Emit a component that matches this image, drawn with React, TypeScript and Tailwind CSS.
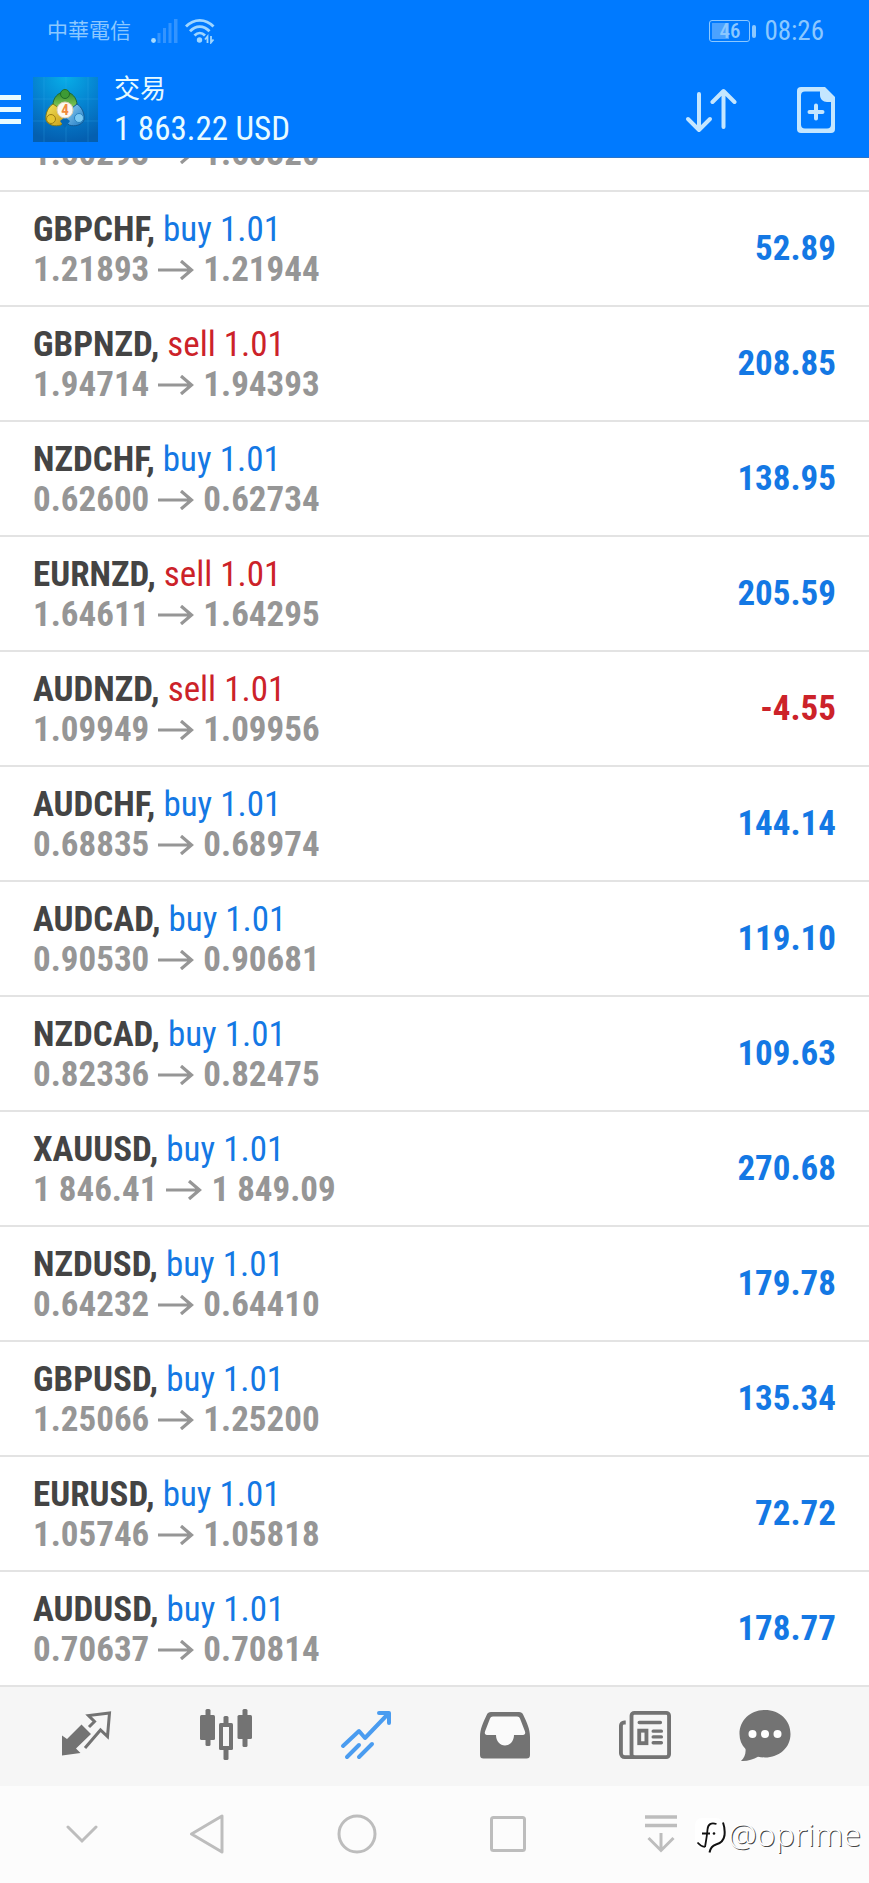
import React from 'react';

type Position = {
  symbol: string;
  side: 'buy' | 'sell';
  volume: string;
  open: string;
  current: string;
  profit: string;
};

const positions: Position[] = [
  { symbol: 'GBPCHF', side: 'buy', volume: '1.01', open: '1.21893', current: '1.21944', profit: '52.89' },
  { symbol: 'GBPNZD', side: 'sell', volume: '1.01', open: '1.94714', current: '1.94393', profit: '208.85' },
  { symbol: 'NZDCHF', side: 'buy', volume: '1.01', open: '0.62600', current: '0.62734', profit: '138.95' },
  { symbol: 'EURNZD', side: 'sell', volume: '1.01', open: '1.64611', current: '1.64295', profit: '205.59' },
  { symbol: 'AUDNZD', side: 'sell', volume: '1.01', open: '1.09949', current: '1.09956', profit: '-4.55' },
  { symbol: 'AUDCHF', side: 'buy', volume: '1.01', open: '0.68835', current: '0.68974', profit: '144.14' },
  { symbol: 'AUDCAD', side: 'buy', volume: '1.01', open: '0.90530', current: '0.90681', profit: '119.10' },
  { symbol: 'NZDCAD', side: 'buy', volume: '1.01', open: '0.82336', current: '0.82475', profit: '109.63' },
  { symbol: 'XAUUSD', side: 'buy', volume: '1.01', open: '1 846.41', current: '1 849.09', profit: '270.68' },
  { symbol: 'NZDUSD', side: 'buy', volume: '1.01', open: '0.64232', current: '0.64410', profit: '179.78' },
  { symbol: 'GBPUSD', side: 'buy', volume: '1.01', open: '1.25066', current: '1.25200', profit: '135.34' },
  { symbol: 'EURUSD', side: 'buy', volume: '1.01', open: '1.05746', current: '1.05818', profit: '72.72' },
  { symbol: 'AUDUSD', side: 'buy', volume: '1.01', open: '0.70637', current: '0.70814', profit: '178.77' },
];

function StatusBar() {
  return (
    <div className="flex h-[62px] items-center justify-between pl-[47px] pr-[45px] text-[#8cc8ff]">
      <div className="flex items-center">
        <span className="text-[21px] leading-none">中華電信</span>
        <svg className="ml-5 h-[26px] w-[27px]" viewBox="0 0 27 26">
          <circle cx="2.5" cy="22.5" r="2.4" fill="#a8dcff" />
          <g fill="#3394ff">
            <rect x="6.5" y="15" width="3" height="10" />
            <rect x="12" y="10" width="3" height="15" />
            <rect x="17.5" y="5" width="3" height="20" />
            <rect x="23" y="1" width="3.5" height="24" />
          </g>
        </svg>
        <svg className="ml-[7px] h-[26px] w-[30px]" viewBox="0 0 30 26" fill="none" stroke="#9fd6ff" strokeWidth="2.8">
          <path d="M1 8.5C9 .2 20.500 .2 28.500 8.500" />
          <path d="M5 13.2C11 7 18.500 7 24.500 13.200" />
          <path d="M9.500 17.5c3.200-3.200 7.300-3.200 10.500 0" />
          <circle cx="14.5" cy="22" r="2.7" fill="#9fd6ff" stroke="none" />
          <path d="M22.500 25v-6.500l-2.500 3M26 18v6.500l2.500-3" strokeWidth="1.8" />
        </svg>
      </div>
      <div className="flex items-center">
        <div className="relative flex h-[22px] w-[41px] items-center justify-center rounded-[3px] border border-[#8cc8ff]">
          <div className="absolute inset-y-0.5 left-0.5 w-[17px] bg-[#4ba2ff]" />
          <span className="relative text-[21px] font-medium leading-none">46</span>
        </div>
        <div className="ml-0.5 h-[13px] w-1 rounded-sm bg-[#8cc8ff]" />
        <span className="ml-2 text-[27px] leading-none">08:26</span>
      </div>
    </div>
  );
}

function AppLogo() {
  return (
    <svg className="size-[65px]" viewBox="0 0 65 65">
      <defs>
        <radialGradient id="sky" cx=".5" cy="0" r="1">
          <stop offset="0" stopColor="#08aee8" />
          <stop offset=".55" stopColor="#057fce" />
          <stop offset="1" stopColor="#045fb0" />
        </radialGradient>
        <linearGradient id="green" x1="0" y1="0" x2="0" y2="1">
          <stop offset="0" stopColor="#2f8a2c" />
          <stop offset="1" stopColor="#8fd05c" />
        </linearGradient>
        <linearGradient id="yellow" x1="0" y1="0" x2="1" y2="1">
          <stop offset="0" stopColor="#f4e35c" />
          <stop offset="1" stopColor="#c79a12" />
        </linearGradient>
        <linearGradient id="blue" x1="0" y1="0" x2="1" y2="1">
          <stop offset="0" stopColor="#9bd8f6" />
          <stop offset="1" stopColor="#1c78c4" />
        </linearGradient>
      </defs>
      <rect width="65" height="65" fill="url(#sky)" />
      <path d="M0 22h65M0 44h65M11 0v65M33 0v65M55 0v65" stroke="#3cb0ee" strokeOpacity=".25" />
      <path d="M32 15c7 0 12 6 12 13l-4 4H24l-4-4c0-7 5-13 12-13z" fill="url(#green)" stroke="#1d6a3a" />
      <path d="M20 27c-5 3-8 10-7 16 2 5 9 7 15 5l5-5-7-12z" fill="url(#yellow)" stroke="#7d7a1c" />
      <path d="M44 27c5 3 8 10 7 16-2 5-9 7-15 5l-5-5 8-12z" fill="url(#blue)" stroke="#125a94" />
      <path d="M27 44l5-4 5 4-5 7z" fill="#0569b8" />
      <circle cx="32" cy="17" r="4.5" fill="#3d9a35" stroke="#1f6e2b" />
      <circle cx="18" cy="42" r="4.5" fill="#e5c532" stroke="#9a7d14" />
      <circle cx="46" cy="41" r="4.5" fill="#7cc9f3" stroke="#2a83c0" />
      <circle cx="32" cy="33" r="8" fill="#fdf8f0" stroke="#d9cdb4" />
      <text x="32" y="38" textAnchor="middle" fontSize="15" fontWeight="700" fill="#f08a3c">4</text>
    </svg>
  );
}

function Header() {
  return (
    <header className="relative z-10 h-[158px] border-b border-[#2b74c8] bg-[#007aff] text-[#e8fbff]">
      <StatusBar />
      <div className="flex h-[95px] items-center pr-[34px]">
        <button aria-label="Menu" className="flex w-[21px] flex-col gap-[7px]">
          <span className="h-[5px] bg-current" />
          <span className="h-[5px] bg-current" />
          <span className="h-[5px] bg-current" />
        </button>
        <div className="ml-3">
          <AppLogo />
        </div>
        <div className="ml-4 flex flex-col pb-0.5">
          <h1 className="text-[26px] leading-[40px]">交易</h1>
          <p className="text-[33px] leading-[40px]">1 863.22 USD</p>
        </div>
        <div className="ml-auto flex items-center gap-[60px] text-[#c4e6ff]">
          <button aria-label="Sort">
            <svg className="h-[46px] w-[52px]" viewBox="0 0 52 46" fill="none" stroke="currentColor" strokeWidth="4" strokeLinecap="round" strokeLinejoin="round">
              <path d="M14 7v36M3 32l11 11 11-11" />
              <path d="M38.500 40V4M27.500 15l11-11 11 11" />
            </svg>
          </button>
          <button aria-label="New order">
            <svg className="h-[46px] w-[38px]" viewBox="0 0 38 46">
              <path d="M4 0h24l10 10v32a4 4 0 0 1-4 4H4a4 4 0 0 1-4-4V4a4 4 0 0 1 4-4z" fill="currentColor" />
              <path d="M8 4.500h15v3.500c0 4 3 7 7 7h4v22.500a4 4 0 0 1-4 4H8a4 4 0 0 1-4-4v-29a4 4 0 0 1 4-4z" fill="#007aff" />
              <path d="M19 18.500v13M12.500 25h13" stroke="currentColor" strokeWidth="4" strokeLinecap="round" />
            </svg>
          </button>
        </div>
      </div>
    </header>
  );
}

function Prices({ open, current }: { open: string; current: string }) {
  return (
    <p className="flex items-center text-[35px] font-bold leading-[40px] text-[#969696]">
      {open}
      <svg className="mx-[9px] h-5 w-9" viewBox="0 0 36 20" fill="none" stroke="currentColor" strokeWidth="3.2">
        <path d="M0 10h34M23 1l10.500 9L23 19" />
      </svg>
      {current}
    </p>
  );
}

function PositionRow({ symbol, side, volume, open, current, profit }: Position) {
  return (
    <li className="flex h-[115px] items-center justify-between border-b-2 border-[#e3e3e3] px-[33px] pt-0.5">
      <div>
        <p className="text-[35px] leading-[40px]">
          <span className="font-bold text-[#444]">{symbol},</span>{' '}
          <span className={side === 'buy' ? 'text-[#1478e4]' : 'text-[#cc2229]'}>
            {side} {volume}
          </span>
        </p>
        <Prices open={open} current={current} />
      </div>
      <span className={profit.startsWith('-') ? 'text-[35px] font-bold text-[#cc2229]' : 'text-[35px] font-bold text-[#1478e4]'}>
        {profit}
      </span>
    </li>
  );
}

function TabBar() {
  return (
    <nav className="grid h-[99px] grid-cols-[repeat(5,140fr)_100fr] items-center justify-items-center bg-[#f6f6f6] pb-1 pl-4 pr-[54px] text-[#737373]">
      <button aria-label="Quotes">
        <svg className="h-[52px] w-[52px]" viewBox="0 0 52 52">
          <path d="M2 26.500l5 3.500L21.500 15.500l9.500 9.500L16 39.500l4.500 4.500L2 46.500z" fill="currentColor" />
          <path d="M29 18l5.500-5.500-6-6L49.500 4l-2 23.500-7-6.500L25 39" fill="none" stroke="currentColor" strokeWidth="3" />
        </svg>
      </button>
      <button aria-label="Charts">
        <svg className="h-[52px] w-[52px]" viewBox="0 0 52 52" fill="currentColor">
          <rect x="5.500" y="0" width="5" height="37" rx="1.500" />
          <rect x="0" y="6" width="15" height="25" rx="1.500" />
          <rect x="42.500" y="0" width="5" height="38" rx="1.500" />
          <rect x="37.500" y="6" width="14.500" height="24" rx="1.500" />
          <rect x="23.500" y="7" width="5" height="44" rx="1.500" />
          <rect x="19" y="14" width="14" height="27" rx="1.500" />
          <rect x="23" y="18" width="6" height="19" fill="#f6f6f6" />
        </svg>
      </button>
      <button aria-label="Trade" className="text-[#4a9cf0]">
        <svg className="h-[52px] w-[52px]" viewBox="0 0 52 52" fill="none" stroke="currentColor" strokeWidth="4" strokeLinecap="round" strokeLinejoin="round">
          <path d="M3 37L19 22l6 7L48 5" />
          <path d="M39 4h10v10" />
          <path d="M7 48l12-12M19 48l13-13" />
        </svg>
      </button>
      <button aria-label="History">
        <svg className="h-[52px] w-[52px]" viewBox="0 0 52 52">
          <path d="M12 3h28c2 0 3.500 1 4.200 2.800C48 14 51 20 51 28v18a3.500 3.500 0 0 1-3.500 3.500h-43A3.500 3.500 0 0 1 1 46V28C1 20 4 14 7.800 5.800 8.500 4 10 3 12 3z" fill="currentColor" />
          <path d="M14 7.500h24c1.500 0 2.500.8 3 2l5 13c.6 1.800 0 3.500-2 3.500h-9c0 6-4 10.500-9 10.500S17 32 17 26H8c-2 0-2.600-1.700-2-3.500l5-13c.5-1.200 1.500-2 3-2z" fill="#fafafa" />
        </svg>
      </button>
      <button aria-label="News">
        <svg className="h-[52px] w-[52px]" viewBox="0 0 54 52" fill="none" stroke="currentColor" strokeWidth="4">
          <rect x="13" y="3" width="39" height="46" rx="3" />
          <path d="M7 13h-1.500C3.500 13 2 14.500 2 16.500V45a4 4 0 0 0 4 4h10" />
          <path d="M21 13h22M35.500 22H44M35.500 28H44M35.500 34H44" strokeLinecap="round" strokeWidth="3.5" />
          <rect x="21" y="21.500" width="7.500" height="13" />
        </svg>
      </button>
      <button aria-label="Chat">
        <svg className="h-[52px] w-[52px]" viewBox="0 0 52 52">
          <path d="M26 1c14.500 0 25.500 10 25.500 24S40 48.500 26 48.500c-2.500 0-5-.3-7-.8-5 2.800-11 4.500-17 4.300 3.500-3.500 5-7.500 4.500-12C2.500 36 .5 31 .5 25 .5 11 11.500 1 26 1z" fill="currentColor" />
          <circle cx="13.500" cy="25" r="4" fill="#fff" />
          <circle cx="26" cy="25" r="4" fill="#fff" />
          <circle cx="38.500" cy="25" r="4" fill="#fff" />
        </svg>
      </button>
    </nav>
  );
}

function SystemNav() {
  return (
    <nav className="relative grid h-[97px] grid-cols-[100fr_150fr_150fr_152fr_154fr] items-center justify-items-center bg-[#fcfcfc] pb-0.5 pl-8 pr-[131px] text-[#bdbdbd]">
      <button aria-label="Hide">
        <svg className="h-10 w-8" viewBox="0 0 32 40" fill="none" stroke="currentColor" strokeWidth="3" strokeLinecap="round">
          <path d="M2 13l14 14 14-14" />
        </svg>
      </button>
      <button aria-label="Back">
        <svg className="h-10 w-9" viewBox="0 0 36 40" fill="none" stroke="currentColor" strokeWidth="3" strokeLinejoin="round">
          <path d="M2.500 20L33 2v36z" />
        </svg>
      </button>
      <button aria-label="Home">
        <svg className="size-10" viewBox="0 0 40 40" fill="none" stroke="currentColor" strokeWidth="3">
          <circle cx="20" cy="20" r="18" />
        </svg>
      </button>
      <button aria-label="Recents">
        <svg className="size-10" viewBox="0 0 40 40" fill="none" stroke="currentColor" strokeWidth="3">
          <rect x="3.500" y="3.500" width="33" height="33" rx="2" />
        </svg>
      </button>
      <button aria-label="Notifications">
        <svg className="h-10 w-9" viewBox="0 0 36 40" fill="none" stroke="currentColor" strokeWidth="3.5">
          <path d="M2 3h32M2 11.500h32" />
          <path d="M18 19v18M5.500 24L18 36.500 30.500 24" strokeWidth="3" />
        </svg>
      </button>
      <div className="absolute right-2 top-7 flex items-center">
        <svg className="mt-1 h-9 w-[31px]" viewBox="0 0 31 36">
          <rect x="0" y="0" width="28" height="31" rx="7" fill="#fff" />
          <path d="M7 15.500h8M21.500 6C16 4.500 13 6 12.500 11.500 12 18 11 23 10 29" fill="none" stroke="#111" strokeWidth="1.8" />
          <path d="M10 29c-3-.5-5.500-2-7.500-4.500" fill="none" stroke="#111" strokeWidth="1.6" />
          <path d="M28 4.500c1.500 4 2 8 1.500 13-1 6-4.500 8-8.500 9-3.500 1-5.500 3-6.500 8" fill="none" stroke="#111" strokeWidth="2" />
          <circle cx="19" cy="15.500" r="1.300" fill="#111" />
        </svg>
        <span className="ml-0.5 font-['Noto_Sans','Open_Sans',sans-serif] text-[32px] font-light leading-[36px] text-white [text-shadow:1px_1px_0_#444]">
          @oprime
        </span>
      </div>
    </nav>
  );
}

export default function App() {
  return (
    <div className="min-h-screen w-full bg-white font-['Roboto_Condensed',Roboto,'Noto_Sans_CJK_TC',sans-serif]">
      <Header />
      <main>
        {/* row scrolled under the header, only its price line still shows */}
        <div className="flex h-[34px] items-end overflow-hidden border-b-2 border-[#e3e3e3] px-[33px] pb-4">
          <Prices open="1.60293" current="1.60320" />
        </div>
        <ul>
          {positions.map((p) => (
            <PositionRow key={p.symbol} {...p} />
          ))}
        </ul>
      </main>
      <TabBar />
      <SystemNav />
    </div>
  );
}
